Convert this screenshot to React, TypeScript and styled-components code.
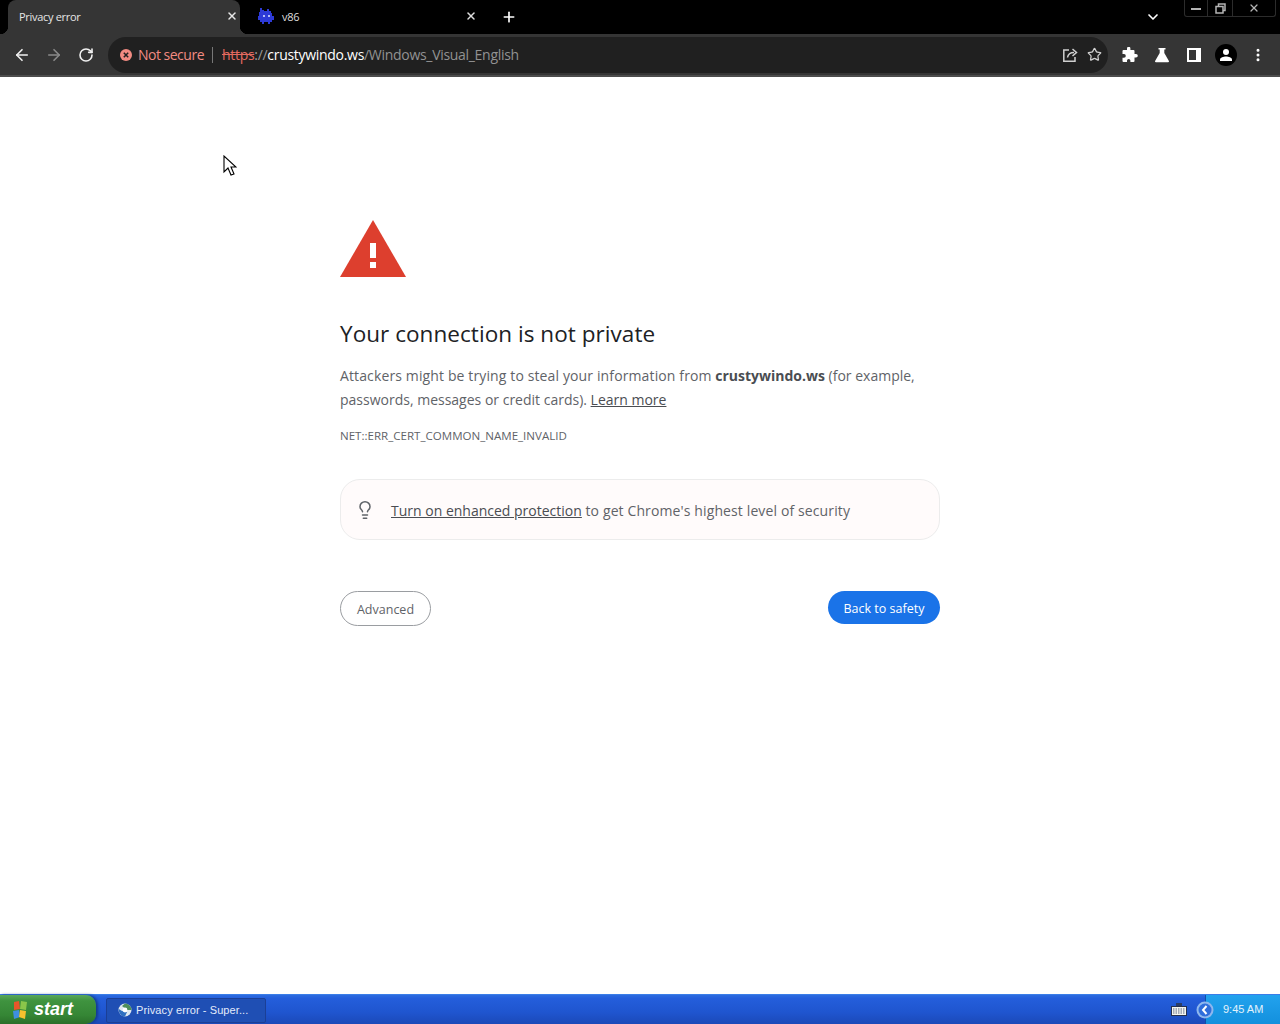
import React from "react";
import styled, { createGlobalStyle } from "styled-components";
import { ArrowLeft, ArrowRight, RotateCw, Plus, X, ChevronDown, Star, Lightbulb, EllipsisVertical } from "lucide-react";

const Global = createGlobalStyle`
  html, body { margin: 0; padding: 0; height: 100%; background: #fff; }
  body { font-family: "Open Sans", "Noto Sans", "Liberation Sans", sans-serif; overflow: hidden; }
`;

const Screen = styled.div`
  position: relative;
  width: 1280px;
  height: 1024px;
  display: flex;
  flex-direction: column;
  overflow: hidden;
`;

const TabStrip = styled.div`
  height: 34px;
  background: #000;
  display: flex;
  align-items: stretch;
  padding-left: 8px;
  color: #fff;
`;

const ActiveTab = styled.div`
  position: relative;
  width: 232px;
  background: #353535;
  border-radius: 8px 8px 0 0;
  display: flex;
  align-items: center;
  padding: 0 2px 2px 11px;
  gap: 8px;
  box-sizing: border-box;
  font-size: 11px;
  letter-spacing: -0.3px;
  color: #e6e6e6;

  &::before,
  &::after {
    content: "";
    position: absolute;
    bottom: 0;
    width: 8px;
    height: 8px;
  }

  &::before {
    left: -8px;
    background: radial-gradient(circle at 0 0, transparent 8px, #353535 8.5px);
  }

  &::after {
    right: -8px;
    background: radial-gradient(circle at 100% 0, transparent 8px, #353535 8.5px);
  }
`;

const IdleTab = styled.div`
  width: 222px;
  margin-left: 18px;
  display: flex;
  align-items: center;
  padding: 0 3px 2px 0;
  gap: 8px;
  box-sizing: border-box;
  font-size: 11px;
  letter-spacing: -0.3px;
  color: #ddd;
`;

const TabTitle = styled.span`
  flex: 1;
`;

const NewTab = styled.div`
  width: 36px;
  margin-left: 11px;
  display: flex;
  align-items: center;
  justify-content: center;
`;

const StripRight = styled.div`
  margin-left: auto;
  display: flex;
  align-items: flex-start;
  padding-right: 4px;
`;

const TabListButton = styled.div`
  height: 34px;
  width: 20px;
  margin-right: 21px;
  display: flex;
  align-items: center;
  justify-content: center;
`;

const WindowControls = styled.div`
  display: flex;
  height: 16px;
  border: 1px solid #2c2c2c;
  border-top: none;
  border-radius: 0 0 3px 3px;
`;

const WindowButton = styled.div<{ $width: number }>`
  width: ${(p) => p.$width}px;
  display: flex;
  align-items: center;
  justify-content: center;
  border-left: 1px solid #2c2c2c;
  color: #b4b4b4;
  &:first-child { border-left: none; }
`;

const Toolbar = styled.div`
  height: 43px;
  box-sizing: border-box;
  background: #353535;
  border-bottom: 2px solid #4c4c4c;
  display: flex;
  align-items: center;
  padding: 0 0 0 6px;
  color: #f1f1f1;
`;

const NavButton = styled.div<{ $dim?: boolean }>`
  width: 32px;
  height: 32px;
  display: flex;
  align-items: center;
  justify-content: center;
  color: ${(p) => (p.$dim ? "#8a8a8a" : "#f1f1f1")};
`;

const Omnibox = styled.div`
  width: 1000px;
  height: 36px;
  margin-left: 6px;
  margin-right: 6px;
  box-sizing: border-box;
  background: #202020;
  border-radius: 18px;
  display: flex;
  align-items: center;
  padding: 0 4px 0 12px;
  font-size: 14px;
  letter-spacing: -0.3px;
  white-space: nowrap;
`;

const NotSecure = styled.span`
  color: #f28b82;
  margin-left: 6px;
  letter-spacing: -0.5px;
`;

const Divider = styled.span`
  width: 1px;
  height: 16px;
  background: #777;
  margin: 0 9px 0 8px;
`;

const Scheme = styled.span`
  color: #e46a60;
  text-decoration: line-through;
`;

const Slashes = styled.span`
  color: #9a9a9a;
`;

const Host = styled.span`
  color: #fff;
`;

const PathText = styled.span`
  color: #929292;
`;

const OmniActions = styled.div`
  margin-left: auto;
  display: flex;
  align-items: center;
  gap: 4px;
  color: #d0d0d0;
`;

const OmniAction = styled.div`
  width: 20px;
  display: flex;
  justify-content: center;
`;

const ToolIcon = styled.div`
  width: 32px;
  height: 32px;
  display: flex;
  align-items: center;
  justify-content: center;
  color: #fff;
`;

const Avatar = styled.div`
  width: 22px;
  height: 22px;
  background: #000;
  border-radius: 50%;
  display: flex;
  align-items: center;
  justify-content: center;
`;

const Page = styled.main`
  flex: 1;
  background: #fff;
  padding-top: 143px;
`;

const Interstitial = styled.div`
  width: 600px;
  margin: 0 auto;
  color: #5f6368;
`;

const Heading = styled.h1`
  margin: 41px 0 0;
  font-size: 22.5px;
  line-height: 32px;
  font-weight: 400;
  letter-spacing: 0.05px;
  color: #202124;
`;

const Body = styled.p`
  margin: 14px 0 0;
  font-size: 14px;
  line-height: 24px;
  color: #5f6368;
`;

const Lead = styled.span`
  letter-spacing: 0.125px;
`;

const Strong = styled.b`
  font-weight: 700;
  color: #4a4d52;
`;

const Under = styled.span`
  text-decoration: underline;
  color: #4a4d52;
`;

const ErrorCode = styled.div`
  margin-top: 16px;
  font-size: 11.55px;
  line-height: 16px;
  color: #5f6368;
`;

const Banner = styled.div`
  margin-top: 35px;
  height: 61px;
  box-sizing: border-box;
  border: 1px solid #ececec;
  border-radius: 20px;
  background: #fffbfb;
  display: flex;
  align-items: center;
  padding: 0 14px;
  gap: 16px;
  font-size: 14px;
  color: #5f6368;
`;

const BannerText = styled.span`
  padding-top: 2px;
`;

const BannerRest = styled.span`
  letter-spacing: 0.12px;
`;

const Actions = styled.div`
  margin-top: 51px;
  display: flex;
  align-items: flex-start;
  justify-content: space-between;
`;

const AdvancedButton = styled.button`
  width: 91px;
  height: 35px;
  border: 1px solid #9a9da1;
  border-radius: 18px;
  background: #fff;
  font: inherit;
  font-size: 12.5px;
  color: #5f6368;
  padding: 2px 0 0;
`;

const SafetyButton = styled.button`
  width: 112px;
  height: 33px;
  border: none;
  border-radius: 17px;
  background: #1a73e8;
  font: inherit;
  font-size: 12.5px;
  color: #fff;
  padding: 2px 0 0;
`;

const Cursor = styled.svg`
  position: absolute;
  left: 223px;
  top: 155px;
`;

const Taskbar = styled.footer`
  height: 30px;
  background: linear-gradient(#2c6ce0 0%, #245edb 12%, #1f55cf 60%, #1b49b8 100%);
  border-top: 1px solid #3a7de8;
  box-sizing: border-box;
  display: flex;
  align-items: stretch;
`;

const StartButton = styled.div`
  width: 96px;
  background: linear-gradient(#5aa85a 0%, #3f933f 20%, #358635 70%, #2a6f2a 100%);
  border-radius: 0 10px 10px 0;
  box-shadow: 2px 0 3px #123a8c;
  display: flex;
  align-items: center;
  padding-left: 11px;
  gap: 5px;
  box-sizing: border-box;
  color: #fff;
  font-family: "Liberation Sans", sans-serif;
  font-style: italic;
  font-weight: 700;
  font-size: 18px;
`;

const TaskButton = styled.div`
  margin: 3px 0 1px 10px;
  width: 160px;
  background: #1f4fb4;
  border: 1px solid #1b3f96;
  border-radius: 2px;
  box-sizing: border-box;
  display: flex;
  align-items: center;
  gap: 4px;
  padding: 0 0 2px 11px;
  color: #e3ebfb;
  font-family: "Liberation Sans", sans-serif;
  font-size: 11px;
  letter-spacing: 0.1px;
`;

const Tray = styled.div`
  margin-left: auto;
  display: flex;
  align-items: center;
  gap: 9px;
`;

const TrayClock = styled.div`
  width: 75px;
  height: 100%;
  background: linear-gradient(#22a2ee, #1390dd);
  border-left: 1px solid #0f4fa8;
  display: flex;
  align-items: center;
  padding: 0 0 2px 17px;
  box-sizing: border-box;
  color: #e3f2fc;
  font-family: "Liberation Sans", sans-serif;
  font-size: 11px;
`;

const TrayIcon = styled.div`
  display: flex;
  justify-content: center;
`;

const TrayToggle = styled.div`
  display: flex;
  margin-right: -18px;
  position: relative;
  z-index: 1;
`;

const Invader = () => (
  <svg width="16" height="16" viewBox="0 0 16 16" fill="#2d3ad6">
    <path d="M2 0h2v2h2v1h3V1h2v2h2v2h1v3h2v4h-2v2h-2v2h-2v-2H6v2H4v-2H2v-2H0V8h1V4h1z" />
    <rect x="5" y="7" width="2" height="2" fill="#b4bcf6" />
    <rect x="10" y="7" width="2" height="2" fill="#b4bcf6" />
  </svg>
);

const ShareIcon = () => (
  <svg width="16" height="16" viewBox="0 0 16 16" fill="none" stroke="currentColor" strokeWidth="1.5">
    <path d="M7 3H1.8v11.2H13V10" />
    <path d="M5.5 10.5C6 7.5 8.5 5.5 12 5.5" />
    <path d="M10.5 2l4 3.5-4 3.5" />
  </svg>
);

const PuzzleIcon = () => (
  <svg width="16" height="16" viewBox="0 0 16 16" fill="currentColor">
    <path d="M5 1.5a1.7 1.7 0 0 1 3.4 0V3h3.1a1 1 0 0 1 1 1v3H14a1.8 1.8 0 0 1 0 3.6h-1.5V14a1 1 0 0 1-1 1H8.4v-1.4a1.7 1.7 0 0 0-3.4 0V15H1.5a1 1 0 0 1-1-1v-3.3H2a1.8 1.8 0 0 0 0-3.6H.5V4a1 1 0 0 1 1-1H5z" />
  </svg>
);

const FlaskIcon = () => (
  <svg width="16" height="16" viewBox="0 0 16 16" fill="currentColor">
    <path d="M4.5 1h7v1.5H10.3V6l4.6 8a.8.8 0 0 1-.7 1.2H1.8a.8.8 0 0 1-.7-1.2l4.6-8V2.5H4.5z" />
  </svg>
);

const SidePanelIcon = () => (
  <svg width="14" height="14" viewBox="0 0 14 14">
    <path fillRule="evenodd" fill="currentColor" d="M0 0h14v14H0zM2 2v10h7V2z" />
  </svg>
);

const PersonIcon = () => (
  <svg width="14" height="14" viewBox="0 0 14 14" fill="#fff">
    <circle cx="7" cy="4" r="3" />
    <path d="M1 13v-1.5C1 9.5 4.5 8.5 7 8.5s6 1 6 3V13z" />
  </svg>
);

const ErrorDot = () => (
  <svg width="12" height="12" viewBox="0 0 12 12">
    <circle cx="6" cy="6" r="6" fill="#f28b82" />
    <path d="M3.8 3.8l4.4 4.4M8.2 3.8l-4.4 4.4" stroke="#202020" strokeWidth="1.5" />
  </svg>
);

const WarningIcon = () => (
  <svg width="66" height="57" viewBox="0 0 66 57" style={{ display: "block" }}>
    <path d="M33 0L66 57H0z" fill="#dd3f2e" />
    <rect x="30" y="23" width="6" height="15" fill="#fff" />
    <rect x="30" y="42" width="6" height="6" fill="#fff" />
  </svg>
);

const XpFlag = () => (
  <svg width="18" height="20" viewBox="0 0 18 20">
    <path d="M3 2l5-1 1 8-6 1z" fill="#e8572a" />
    <path d="M10 1l6 1-1 8-6-1z" fill="#8ac64a" />
    <path d="M2 11l6-1 1 7-6 2z" fill="#3f8fe0" />
    <path d="M9 10l6 1-1 8-6-2z" fill="#f6c12e" />
  </svg>
);

const ChromeGlyph = () => (
  <svg width="14" height="14" viewBox="0 0 14 14">
    <circle cx="7" cy="7" r="6.5" fill="#dfe8ef" />
    <path d="M7 .5A6.5 6.5 0 0 1 13.5 7H9L4 3z" fill="#4f8f5a" />
    <path d="M.8 6A6.5 6.5 0 0 0 7 13.5L9 9 4 8z" fill="#2f6fc0" />
    <circle cx="7" cy="7" r="2.4" fill="#fff" />
  </svg>
);

const KeyboardIcon = () => (
  <svg width="16" height="14" viewBox="0 0 16 14">
    <rect x="5" y="0" width="6" height="3" fill="#2b3d66" />
    <rect x="0.5" y="3.5" width="15" height="9" fill="#f4f4ee" stroke="#25304f" />
    <path d="M2 6h12M2 8h12M2 10h12" stroke="#596582" strokeDasharray="1.5 1" />
  </svg>
);

const TrayChevron = () => (
  <svg width="18" height="18" viewBox="0 0 18 18">
    <circle cx="9" cy="9" r="8.5" fill="#8fb8ee" />
    <circle cx="9" cy="9" r="6.5" fill="#2f6edb" />
    <path d="M10.5 5L7 9l3.5 4" stroke="#fff" strokeWidth="2" fill="none" />
  </svg>
);

export default function App() {
  return (
    <Screen>
      <Global />
      <TabStrip>
        <ActiveTab>
          <TabTitle>Privacy error</TabTitle>
          <X size={12} strokeWidth={3} />
        </ActiveTab>
        <IdleTab>
          <Invader />
          <TabTitle>v86</TabTitle>
          <X size={12} strokeWidth={3} />
        </IdleTab>
        <NewTab>
          <Plus size={16} strokeWidth={2.5} />
        </NewTab>
        <StripRight>
          <TabListButton>
            <ChevronDown size={16} strokeWidth={2.5} />
          </TabListButton>
          <WindowControls>
            <WindowButton $width={22}>
              <svg width="10" height="3"><rect width="10" height="2" y="1" fill="#b4b4b4" /></svg>
            </WindowButton>
            <WindowButton $width={24}>
              <svg width="11" height="11" viewBox="0 0 11 11" fill="none" stroke="#b4b4b4" strokeWidth="1.5">
                <path d="M3.5 3V1H10v6.5H8" />
                <rect x="1" y="3.5" width="7" height="6.5" />
              </svg>
            </WindowButton>
            <WindowButton $width={42}>
              <X size={12} strokeWidth={2.5} />
            </WindowButton>
          </WindowControls>
        </StripRight>
      </TabStrip>

      <Toolbar>
        <NavButton><ArrowLeft size={18} strokeWidth={2.2} /></NavButton>
        <NavButton $dim><ArrowRight size={18} strokeWidth={2.2} /></NavButton>
        <NavButton><RotateCw size={16} strokeWidth={2.4} /></NavButton>
        <Omnibox>
          <ErrorDot />
          <NotSecure>Not secure</NotSecure>
          <Divider />
          <Scheme>https</Scheme>
          <Slashes>://</Slashes>
          <Host>crustywindo.ws</Host>
          <PathText>/Windows_Visual_English</PathText>
          <OmniActions>
            <OmniAction><ShareIcon /></OmniAction>
            <OmniAction><Star size={15} strokeWidth={2} /></OmniAction>
          </OmniActions>
        </Omnibox>
        <ToolIcon><PuzzleIcon /></ToolIcon>
        <ToolIcon><FlaskIcon /></ToolIcon>
        <ToolIcon><SidePanelIcon /></ToolIcon>
        <ToolIcon><Avatar><PersonIcon /></Avatar></ToolIcon>
        <ToolIcon><EllipsisVertical size={16} strokeWidth={2.5} /></ToolIcon>
      </Toolbar>

      <Page>
        <Interstitial>
          <WarningIcon />
          <Heading>Your connection is not private</Heading>
          <Body>
            <Lead>Attackers might be trying to steal your information from</Lead> <Strong>crustywindo.ws</Strong> (for
            example, passwords, messages or credit cards). <Under>Learn more</Under>
          </Body>
          <ErrorCode>NET::ERR_CERT_COMMON_NAME_INVALID</ErrorCode>
          <Banner>
            <Lightbulb size={20} strokeWidth={1.8} />
            <BannerText>
              <Under>Turn on enhanced protection</Under> <BannerRest>to get Chrome's highest level of security</BannerRest>
            </BannerText>
          </Banner>
          <Actions>
            <AdvancedButton>Advanced</AdvancedButton>
            <SafetyButton>Back to safety</SafetyButton>
          </Actions>
        </Interstitial>
      </Page>

      <Taskbar>
        <StartButton>
          <XpFlag />
          start
        </StartButton>
        <TaskButton>
          <ChromeGlyph />
          Privacy error - Super...
        </TaskButton>
        <Tray>
          <TrayIcon><KeyboardIcon /></TrayIcon>
          <TrayToggle><TrayChevron /></TrayToggle>
          <TrayClock>9:45 AM</TrayClock>
        </Tray>
      </Taskbar>

      <Cursor width="14" height="22" viewBox="0 0 14 22">
        <path d="M1 1v16l4-4 3 7 3-1-3-7h5z" fill="#fff" stroke="#000" strokeWidth="1.1" />
      </Cursor>
    </Screen>
  );
}
